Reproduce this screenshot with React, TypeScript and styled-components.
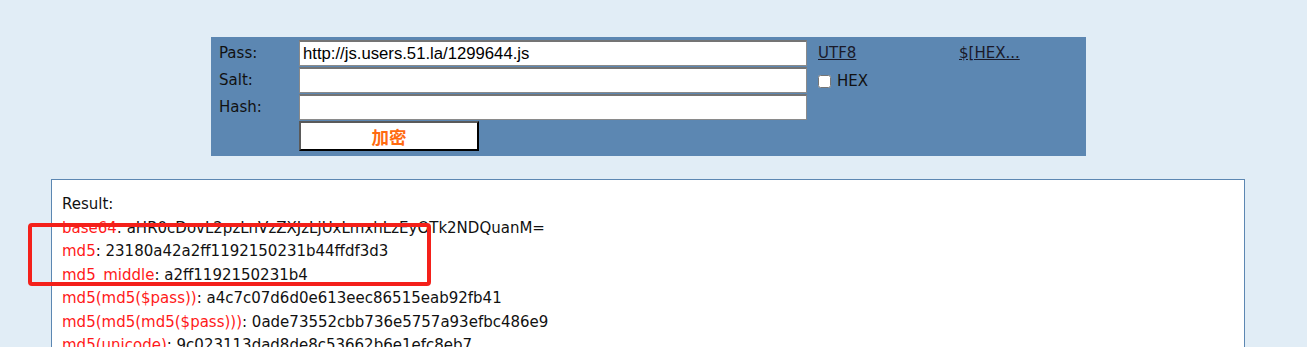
import React from 'react';
import styled, { createGlobalStyle } from 'styled-components';

const GlobalStyle = createGlobalStyle`
  html, body {
    margin: 0;
    padding: 0;
    background: #e1edf6;
    font-family: "DejaVu Sans", Verdana, sans-serif;
  }
`;

const results: { key: string; value: string }[] = [
  { key: 'base64', value: 'aHR0cDovL2pzLnVzZXJzLjUxLmxhLzEyOTk2NDQuanM=' },
  { key: 'md5', value: '23180a42a2ff1192150231b44ffdf3d3' },
  { key: 'md5_middle', value: 'a2ff1192150231b4' },
  { key: 'md5(md5($pass))', value: 'a4c7c07d6d0e613eec86515eab92fb41' },
  { key: 'md5(md5(md5($pass)))', value: '0ade73552cbb736e5757a93efbc486e9' },
  { key: 'md5(unicode)', value: '9c023113dad8de8c53662b6e1efc8eb7' },
];

const App: React.FC = () => {
  return (
    <Page>
      <GlobalStyle />
      <Panel>
        <Row>
          <Label>Pass:</Label>
          <TextInput defaultValue="http://js.users.51.la/1299644.js" />
          <Extra>
            <Link href="#">UTF8</Link>
          </Extra>
          <Link href="#">$[HEX...</Link>
        </Row>
        <Row>
          <Label>Salt:</Label>
          <TextInput />
          <Extra>
            <CheckLabel>
              <Check type="checkbox" />
              HEX
            </CheckLabel>
          </Extra>
        </Row>
        <Row>
          <Label>Hash:</Label>
          <TextInput />
        </Row>
        <Row>
          <Label />
          <SubmitButton>加密</SubmitButton>
        </Row>
      </Panel>
      <ResultBox>
        <ResultTitle>Result:</ResultTitle>
        {results.map((r) => (
          <ResultLine key={r.key}>
            <Key>{r.key}</Key>: {r.value}
          </ResultLine>
        ))}
      </ResultBox>
      <Highlight />
    </Page>
  );
};

export default App;

const Page = styled.div`
  position: relative;
  width: 1307px;
  height: 347px;
  overflow: hidden;
  padding-top: 37px;
  box-sizing: border-box;
`;

const Panel = styled.div`
  width: 875px;
  height: 119px;
  margin-left: 211px;
  background: #5c87b2;
  box-sizing: border-box;
  padding: 3px 0 0 8px;
  display: flex;
  flex-direction: column;
`;

const Row = styled.div`
  display: flex;
  align-items: flex-start;
  margin-bottom: 1px;
`;

const Label = styled.div`
  width: 80px;
  height: 26px;
  line-height: 26px;
  font-size: 15px;
  color: #111;
`;

const TextInput = styled.input`
  width: 508px;
  height: 26px;
  box-sizing: border-box;
  margin: 0;
  padding: 0 3px;
  border: 1px solid #8a8a8a;
  border-top: 2px solid #747474;
  background: #fff;
  font-family: "Liberation Sans", Arial, sans-serif;
  font-size: 16.7px;
  color: #000;
  outline: none;
`;

const Extra = styled.div`
  width: 152px;
  padding-left: 11px;
  box-sizing: border-box;
  height: 26px;
  display: flex;
  align-items: center;
`;

const Link = styled.a`
  font-size: 15px;
  color: #1a1a2a;
  text-decoration: underline;
  line-height: 26px;
`;

const CheckLabel = styled.label`
  display: flex;
  align-items: center;
  font-size: 15px;
  color: #111;
  margin-top: 2px;
`;

const Check = styled.input`
  width: 13px;
  height: 13px;
  margin: 0 6px 0 0;
`;

const SubmitButton = styled.button`
  width: 180px;
  height: 30px;
  margin: 0;
  padding: 0;
  background: #fff;
  border: 2px solid;
  border-color: #5a5a5a #000 #000 #5a5a5a;
  font-family: "Noto Sans CJK SC", sans-serif;
  font-weight: bold;
  font-size: 17.5px;
  color: #ff6a10;
  cursor: pointer;
`;

const ResultBox = styled.div`
  margin: 23px 0 0 51px;
  width: 1194px;
  height: 200px;
  box-sizing: border-box;
  background: #fff;
  border: 1px solid #5c87b2;
  padding: 13px 10px;
  font-size: 15px;
  line-height: 23.5px;
  color: #111;
`;

const ResultTitle = styled.div``;

const ResultLine = styled.div`
  white-space: nowrap;
`;

const Key = styled.span`
  color: #ff1a1a;
`;

const Highlight = styled.div`
  position: absolute;
  left: 28px;
  top: 223px;
  width: 403px;
  height: 63px;
  box-sizing: border-box;
  border: 4px solid #f4201a;
  border-radius: 4px;
  pointer-events: none;
`;
